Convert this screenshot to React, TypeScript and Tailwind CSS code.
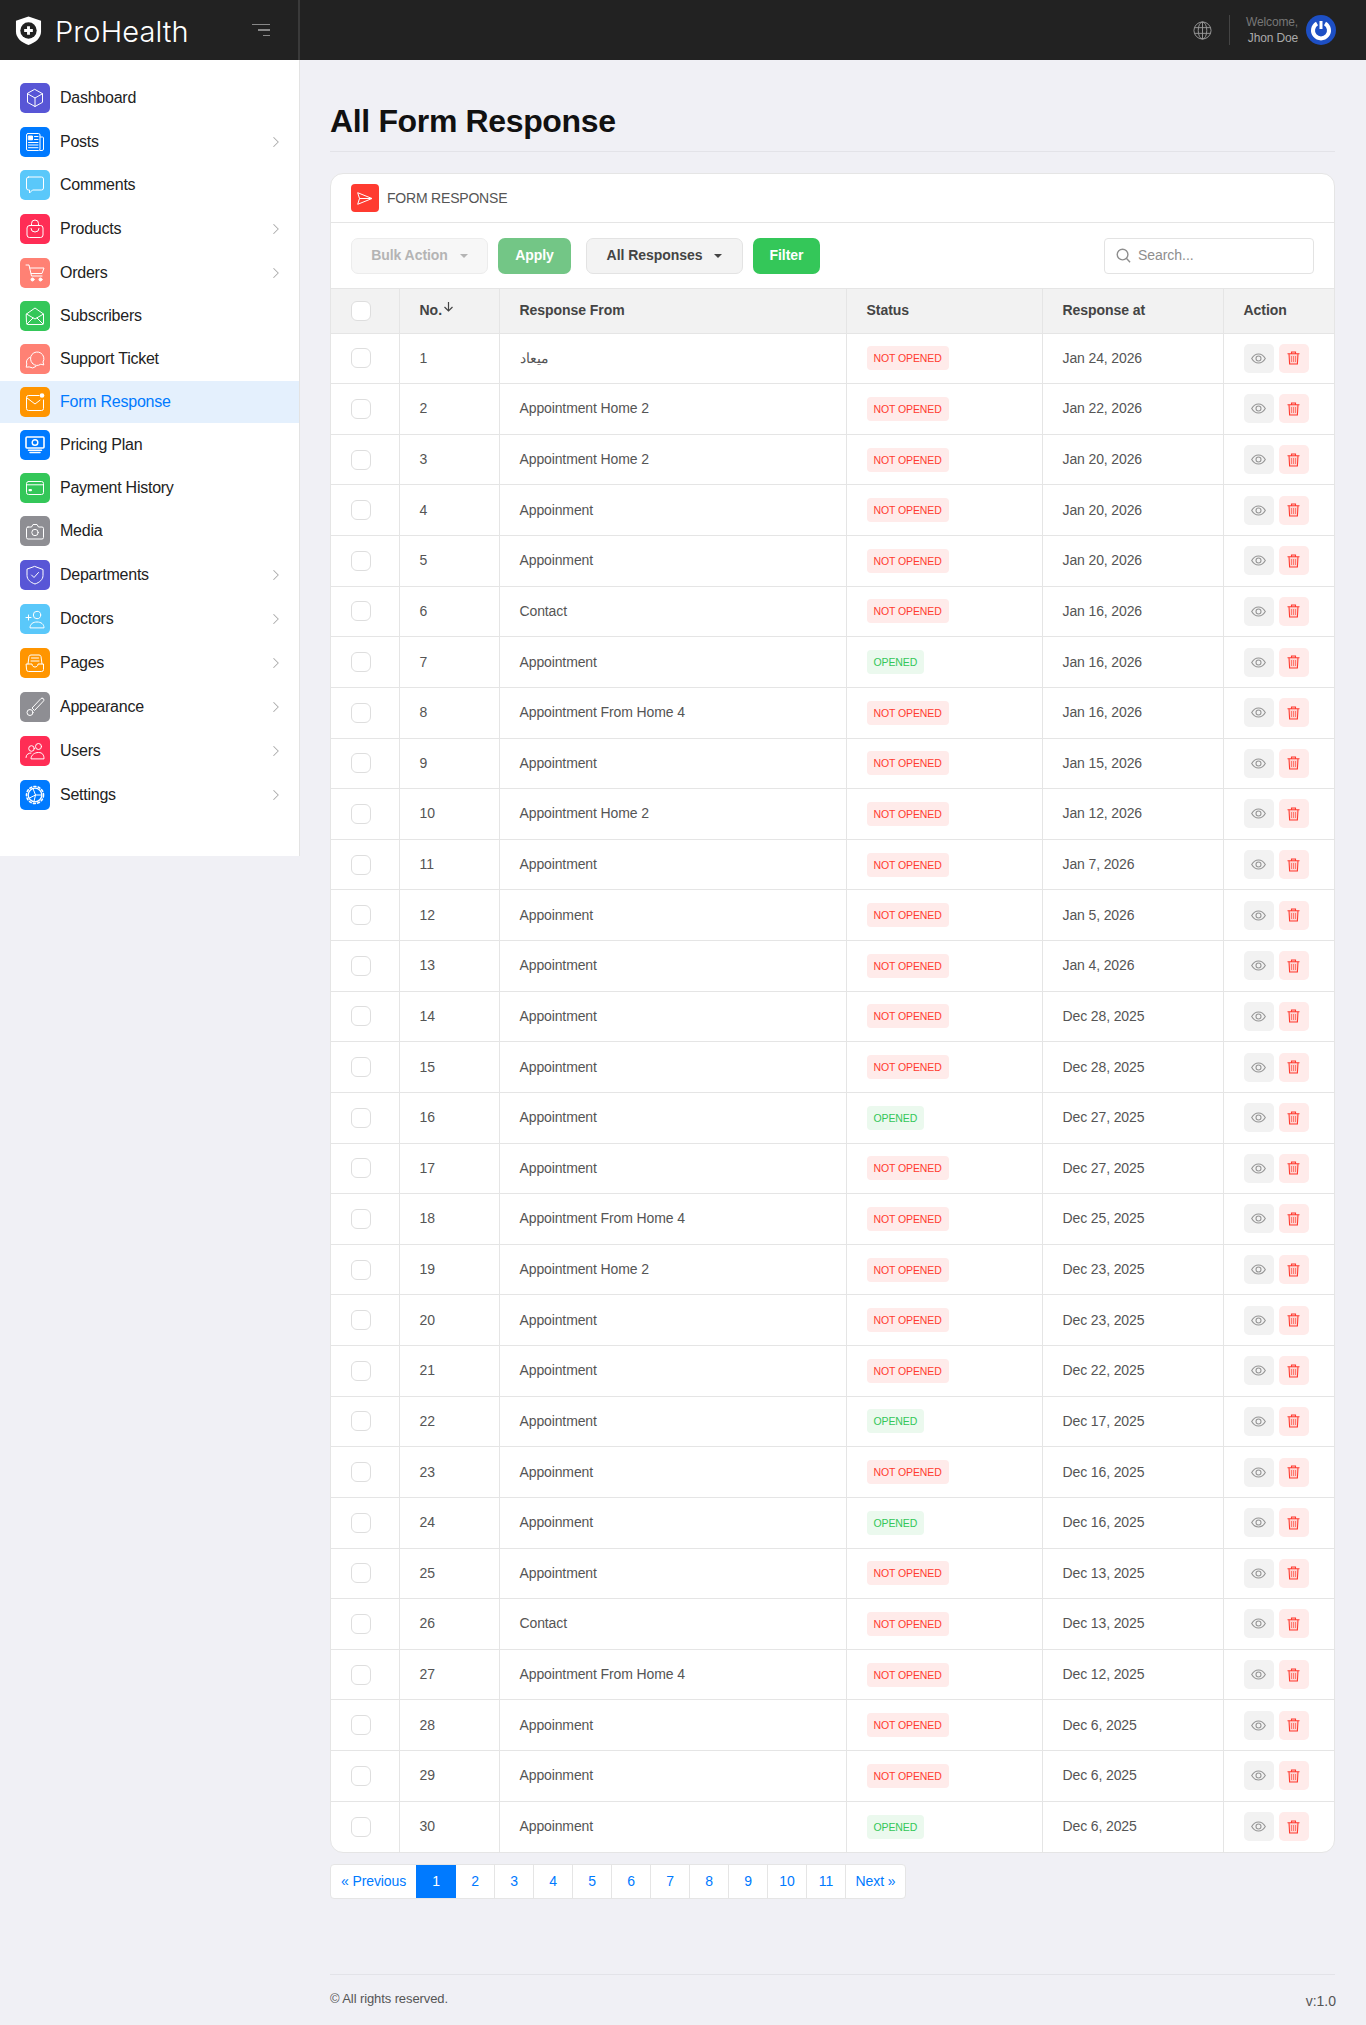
import { ChevronRight } from 'lucide-react'
import type { ReactNode } from 'react'

const ICONS: Record<string, ReactNode> = {
  cube: <path d="M10 1.500l7.500 4.200v8.600L10 18.500l-7.500-4.200V5.700zM2.500 5.700L10 10l7.500-4.300M10 10v8.500" />,
  news: (
    <>
      <rect x="1.500" y="1.500" width="13.500" height="17" rx="1.500" />
      <path d="M15 5h2.500a1 1 0 011 1v11a1.500 1.500 0 01-1.500 1.500h-2M9.500 4.500h3.500M9.500 7.500h3.500M3.500 10.500h9.500M3.500 13h9.500M3.500 15.700h9.500" />
      <rect x="3.700" y="4" width="3.800" height="3.800" fill="white" />
    </>
  ),
  comment: <path d="M3.500 2h13a2 2 0 012 2v9a2 2 0 01-2 2H7.500l-3 3v-3h-1a2 2 0 01-2-2V4a2 2 0 012-2z" />,
  bag: (
    <>
      <rect x="2" y="6.500" width="16" height="12" rx="2.500" />
      <path d="M6.500 6.500V4.500a3.500 3.500 0 017 0v2M6 9.500a4 3.500 0 008 0" />
    </>
  ),
  cart: (
    <>
      <path d="M1 2h3l2.500 11h10.500M5 5h14l-2 5.500H6.200" />
      <circle cx="7.500" cy="16.500" r="1.500" fill="white" />
      <circle cx="15.500" cy="16.500" r="1.500" fill="white" />
    </>
  ),
  mailOpen: <path d="M1.500 8L10 2l8.500 6v9a1.500 1.500 0 01-1.500 1.500H3A1.500 1.500 0 011.500 17zM1.500 8l8.500 5 8.500-5M2 18l6-6M18 18l-6-6" />,
  support: <path d="M7.500 14.500a6.700 6.700 0 1110.500-1.500l.8 3-3-.8a6.700 6.700 0 01-8.300-.7zM4.500 8.500a5 5 0 00-2.700 6.500l-.6 3.200 3-.3a5.500 5.500 0 006.800-.4" />,
  mailDot: (
    <>
      <path d="M14 3.500H3.500a2 2 0 00-2 2v11a2 2 0 002 2h13a2 2 0 002-2V8M1.800 5.800L10 12l5-3.800" />
      <circle cx="17" cy="3.500" r="2.300" fill="white" stroke="none" />
    </>
  ),
  cash: (
    <>
      <rect x="1" y="2" width="18" height="11" rx="1" strokeWidth="1.600" />
      <circle cx="10" cy="7.500" r="2.800" strokeWidth="1.400" />
      <path d="M3.500 15.200h13M5 17.500h10" strokeWidth="1.500" />
    </>
  ),
  card: (
    <>
      <rect x="1.500" y="3.500" width="17" height="13" rx="2" />
      <path d="M1.500 6.800h17" />
      <rect x="3.500" y="11" width="3.500" height="2.200" rx="1" fill="white" stroke="none" />
    </>
  ),
  camera: (
    <>
      <path d="M3 6h3.500L8 3.500h4L13.500 6H17a1.500 1.500 0 011.500 1.500v9A1.500 1.500 0 0117 18H3a1.500 1.500 0 01-1.500-1.500v-9A1.500 1.500 0 013 6z" />
      <circle cx="10" cy="11.500" r="3.200" />
    </>
  ),
  shield: <path d="M10 1.500l8 3v6c0 4-3.500 7-8 8.500-4.500-1.500-8-4.500-8-8.500v-6zM6.500 10l2.500 2.500 4.500-5" />,
  doctor: (
    <>
      <circle cx="12" cy="6" r="3.700" />
      <path d="M5 18.500c0-3.500 3-5.500 7-5.500s7 2 7 5.500zM1 8.500h5M3.500 6v5" />
    </>
  ),
  tray: <path d="M1.500 11h5.500c0 2 1.500 3 3 3s3-1 3-3h5.500v5.500a2 2 0 01-2 2h-13a2 2 0 01-2-2zM3 11l1-7.500a2 2 0 012-1.500h8a2 2 0 012 1.500l1 7.500M6.500 5h7M6 8h8" />,
  brush: (
    <>
      <path d="M18 1.500a1.500 1.500 0 00-2 0L7 11l2.500 2.500 9-9.500a1.500 1.500 0 00-.5-2.500z" />
      <circle cx="5" cy="15.500" r="3" />
    </>
  ),
  users: (
    <>
      <circle cx="6.500" cy="7.500" r="2.800" />
      <circle cx="13.500" cy="5.500" r="3" />
      <path d="M1 16.500c0-3 2.500-4.500 5-4.500M6 17.500c0-3.500 3.500-6 7.500-6s5.500 2.500 5.500 6z" />
    </>
  ),
  gear: (
    <>
      <circle cx="10" cy="10" r="6.800" strokeWidth="1.300" />
      <circle cx="10" cy="10" r="8.500" strokeWidth="1.600" strokeDasharray="2 2.300" />
      <path d="M8 3.500L10.500 10l-6 3M10.500 10H16.500M10.500 10l-1.500 6.500" />
    </>
  ),
}

const MENU = [
  { label: 'Dashboard', icon: 'cube', bg: 'bg-[#5856d6]' },
  { label: 'Posts', icon: 'news', bg: 'bg-[#007aff]', sub: true },
  { label: 'Comments', icon: 'comment', bg: 'bg-[#5ac8fa]' },
  { label: 'Products', icon: 'bag', bg: 'bg-[#ff2d55]', sub: true },
  { label: 'Orders', icon: 'cart', bg: 'bg-[#ff8174]', sub: true },
  { label: 'Subscribers', icon: 'mailOpen', bg: 'bg-[#34c759]' },
  { label: 'Support Ticket', icon: 'support', bg: 'bg-[#ff8174]' },
  { label: 'Form Response', icon: 'mailDot', bg: 'bg-[#ff9500]', active: true },
  { label: 'Pricing Plan', icon: 'cash', bg: 'bg-[#007aff]' },
  { label: 'Payment History', icon: 'card', bg: 'bg-[#34c759]' },
  { label: 'Media', icon: 'camera', bg: 'bg-[#8e8e93]' },
  { label: 'Departments', icon: 'shield', bg: 'bg-[#5856d6]', sub: true },
  { label: 'Doctors', icon: 'doctor', bg: 'bg-[#5ac8fa]', sub: true },
  { label: 'Pages', icon: 'tray', bg: 'bg-[#ff9500]', sub: true },
  { label: 'Appearance', icon: 'brush', bg: 'bg-[#8e8e93]', sub: true },
  { label: 'Users', icon: 'users', bg: 'bg-[#ff2d55]', sub: true },
  { label: 'Settings', icon: 'gear', bg: 'bg-[#007aff]', sub: true },
]

const A = 'Appointment'
const B = 'Appoinment'
const H = 'Appointment Home 2'
const F = 'Appointment From Home 4'

// response from, date, opened
const ROWS: [string, string, boolean?][] = [
  ['ميعاد', 'Jan 24, 2026'],
  [H, 'Jan 22, 2026'],
  [H, 'Jan 20, 2026'],
  [B, 'Jan 20, 2026'],
  [B, 'Jan 20, 2026'],
  ['Contact', 'Jan 16, 2026'],
  [A, 'Jan 16, 2026', true],
  [F, 'Jan 16, 2026'],
  [A, 'Jan 15, 2026'],
  [H, 'Jan 12, 2026'],
  [A, 'Jan 7, 2026'],
  [B, 'Jan 5, 2026'],
  [A, 'Jan 4, 2026'],
  [A, 'Dec 28, 2025'],
  [A, 'Dec 28, 2025'],
  [A, 'Dec 27, 2025', true],
  [A, 'Dec 27, 2025'],
  [F, 'Dec 25, 2025'],
  [H, 'Dec 23, 2025'],
  [A, 'Dec 23, 2025'],
  [A, 'Dec 22, 2025'],
  [A, 'Dec 17, 2025', true],
  [B, 'Dec 16, 2025'],
  [B, 'Dec 16, 2025', true],
  [A, 'Dec 13, 2025'],
  ['Contact', 'Dec 13, 2025'],
  [F, 'Dec 12, 2025'],
  [B, 'Dec 6, 2025'],
  [B, 'Dec 6, 2025'],
  [B, 'Dec 6, 2025', true],
]

const Checkbox = () => (
  <span className="block w-[20px] h-[20px] rounded-[6px] border border-[#dedede] bg-white" />
)

const Caret = ({ className }: { className: string }) => (
  <span className={`inline-block ml-[12px] mb-[2px] w-0 h-0 border-x-[4px] border-x-transparent border-t-[4px] ${className}`} />
)

const Header = () => (
  <header className="h-[60px] bg-[#222222] flex items-center">
    <div className="w-[300px] h-full flex items-center border-r-2 border-[#3a3a3a] shrink-0">
      <svg width="27" height="29" viewBox="0 0 28 30" className="ml-[15px]">
        <path d="M14 0.500L27 5v11c0 7-6 11.500-13 14C7 27.500 1 23 1 16V5z" fill="white" />
        <circle cx="14" cy="15" r="8.500" fill="#222222" />
        <path d="M14 10.500v9M9.500 15h9" stroke="white" strokeWidth="3" />
      </svg>
      <span className="ml-[13px] mt-[2px] font-['Inter'] font-light text-[29px] leading-none text-white tracking-[0.1px]">ProHealth</span>
      <div className="ml-auto mr-[28px] flex flex-col items-end gap-[4px]">
        <span className="block w-[18px] h-[1.5px] bg-[#888888]" />
        <span className="block w-[12px] h-[1.5px] bg-[#888888]" />
        <span className="block w-[7px] h-[1.5px] bg-[#888888]" />
      </div>
    </div>
    <div className="flex-1 flex items-center justify-end pr-[30px]">
      <svg width="19" height="19" viewBox="0 0 20 20" fill="none" stroke="#999999" strokeWidth="1">
        <circle cx="10" cy="10" r="9" />
        <ellipse cx="10" cy="10" rx="4.500" ry="9" />
        <path d="M10 1v18M1.500 7h17M1.500 13h17" />
      </svg>
      <span className="ml-[17px] block w-px h-[30px] bg-[#444444]" />
      <div className="ml-[16px] text-right text-[12px] leading-[16px] tracking-[-0.15px]">
        <div className="text-[#777777]">Welcome,</div>
        <div className="text-[#aaaaaa]">Jhon Doe</div>
      </div>
      <div className="ml-[8px] w-[30px] h-[30px] rounded-full bg-[#1d4fc4] flex items-center justify-center">
        <svg width="22" height="22" viewBox="0 0 22 22" fill="none" stroke="white" strokeWidth="4">
          <path d="M7 4.500a8 8 0 108 0" />
          <path d="M11 2v8" strokeWidth="3" />
        </svg>
      </div>
    </div>
  </header>
)

const Sidebar = () => (
  <aside className="w-[300px] h-[796px] shrink-0 bg-white border-r border-[#e3e3e3] pt-[17px]">
    {MENU.map((item) => (
      <div
        key={item.label}
        className={`flex items-center pl-[20px] pr-[14px] mb-px ${item.sub ? 'h-[43px]' : 'h-[42px]'} ${item.active ? 'bg-[#e4f0fd]' : ''}`}
      >
        <span className={`w-[30px] h-[30px] rounded-[5px] flex items-center justify-center shrink-0 ${item.bg}`}>
          <svg width="20" height="20" viewBox="0 0 20 20" fill="none" stroke="white" strokeWidth="1" strokeLinejoin="round" strokeLinecap="round">
            {ICONS[item.icon]}
          </svg>
        </span>
        <span className={`ml-[10px] text-[16px] tracking-[-0.25px] ${item.active ? 'text-[#007aff]' : 'text-[#222222]'}`}>{item.label}</span>
        {item.sub && <ChevronRight size={18} strokeWidth={1.4} className="ml-auto text-[#aaaaaa]" />}
      </div>
    ))}
  </aside>
)

const Toolbar = () => (
  <div className="h-[66px] flex items-center px-[20px] border-b border-[#e5e5e5] font-bold text-[14px] tracking-[-0.05px]">
    <button className="w-[137px] h-[36px] rounded-[7px] border border-[#ececec] bg-[#f7f7f7] text-[#b4b4b4]">
      Bulk Action<Caret className="border-t-[#b4b4b4]" />
    </button>
    <button className="ml-[10px] w-[73px] h-[36px] rounded-[7px] bg-[#73c686] text-white">Apply</button>
    <button className="ml-[15px] w-[157px] h-[36px] rounded-[7px] border border-[#e3e3e3] bg-[#f3f3f3] text-[#444444]">
      All Responses<Caret className="border-t-[#444444]" />
    </button>
    <button className="ml-[10px] w-[67px] h-[36px] rounded-[7px] bg-[#34c759] text-white">Filter</button>
    <div className="ml-auto w-[210px] h-[36px] rounded-[4px] border border-[#e3e3e3] bg-white flex items-center pl-[11px]">
      <svg width="15" height="15" viewBox="0 0 16 16" fill="none" stroke="#8e8e8e" strokeWidth="1.500">
        <circle cx="7" cy="7" r="5.700" />
        <path d="M11 11l4 4.300" />
      </svg>
      <span className="ml-[7px] font-normal text-[#8e8e8e]">Search...</span>
    </div>
  </div>
)

const RowActions = () => (
  <div className="flex gap-[5px]">
    <span className="w-[30px] h-[29px] rounded-[5px] bg-[#f2f2f2] flex items-center justify-center">
      <svg width="15" height="11" viewBox="0 0 15 11" fill="none" stroke="#969696" strokeWidth="1.100">
        <path d="M0.700 5.500C2.500 2.300 5 1 7.500 1s5 1.300 6.800 4.500C12.500 8.700 10 10 7.500 10S2.500 8.700 0.700 5.500z" />
        <circle cx="7.500" cy="5.500" r="2.500" />
      </svg>
    </span>
    <span className="w-[30px] h-[29px] rounded-[5px] bg-[#ffebea] flex items-center justify-center">
      <svg width="13" height="14" viewBox="0 0 13 14" fill="none" stroke="#ff3b30" strokeWidth="1.100">
        <path d="M0.500 2.800h12M4.500 2.500V1h4v1.500M2 2.800l0.600 10.200h7.800L11 2.800" fill="#ffd6d3" />
        <path d="M4.500 5v6M6.500 5v6M8.500 5v6" stroke="#ff7a71" />
      </svg>
    </span>
  </div>
)

const Table = () => (
  <table className="w-full table-fixed border-collapse text-[14px] text-[#555555]">
    <colgroup>
      <col className="w-[68px]" />
      <col className="w-[100px]" />
      <col className="w-[347px]" />
      <col className="w-[196px]" />
      <col className="w-[181px]" />
      <col />
    </colgroup>
    <thead>
      <tr className="h-[44px] bg-[#f2f2f2] text-[#444444] font-bold text-left">
        <th className="pl-[20px] border-b border-r border-[#e5e5e5]"><Checkbox /></th>
        <th className="pl-[20px] border-b border-r border-[#e5e5e5]">
          <span className="inline-flex items-start">
            No.
            <svg width="11" height="11" viewBox="0 0 11 11" fill="none" stroke="#444444" strokeWidth="1.200" className="mt-[1px] ml-px">
              <path d="M5.500 1v9M1.500 6l4 4 4-4" />
            </svg>
          </span>
        </th>
        <th className="pl-[20px] border-b border-r border-[#e5e5e5] tracking-[-0.05px]">Response From</th>
        <th className="pl-[20px] border-b border-r border-[#e5e5e5] tracking-[-0.05px]">Status</th>
        <th className="pl-[20px] border-b border-r border-[#e5e5e5] tracking-[-0.05px]">Response at</th>
        <th className="pl-[20px] border-b border-[#e5e5e5] tracking-[-0.05px]">Action</th>
      </tr>
    </thead>
    <tbody className="tracking-[-0.12px]">
      {ROWS.map(([from, date, opened], i) => (
        <tr key={i} className="h-[50.63px]">
          <td className={`pl-[20px] border-r border-[#e5e5e5] ${i < 29 ? 'border-b' : ''}`}><Checkbox /></td>
          <td className={`pl-[20px] border-r border-[#e5e5e5] ${i < 29 ? 'border-b' : ''}`}>{i + 1}</td>
          <td className={`pl-[20px] border-r border-[#e5e5e5] ${i < 29 ? 'border-b' : ''}`}>{from}</td>
          <td className={`pl-[20px] border-r border-[#e5e5e5] ${i < 29 ? 'border-b' : ''}`}>
            {opened ? (
              <span className="inline-block h-[24px] leading-[24px] px-[7px] rounded-[4px] bg-[#ebf9ee] text-[#34c759] text-[10.5px] tracking-[-0.1px]">OPENED</span>
            ) : (
              <span className="inline-block h-[24px] leading-[24px] px-[7px] rounded-[4px] bg-[#ffebea] text-[#ff3b30] text-[10.5px] tracking-[-0.1px]">NOT OPENED</span>
            )}
          </td>
          <td className={`pl-[20px] border-r border-[#e5e5e5] ${i < 29 ? 'border-b' : ''}`}>{date}</td>
          <td className={`pl-[20px] border-[#e5e5e5] ${i < 29 ? 'border-b' : ''}`}><RowActions /></td>
        </tr>
      ))}
    </tbody>
  </table>
)

const Pagination = () => {
  const pages = ['1', '2', '3', '4', '5', '6', '7', '8', '9', '10', '11']
  return (
    <div className="mt-[11px] w-fit h-[35px] flex items-stretch rounded-[4px] border border-[#e5e5e5] bg-white text-[14px] text-[#007aff] tracking-[-0.1px]">
      <span className="w-[85px] flex items-center justify-center">« Previous</span>
      {pages.map((p, i) => (
        <span
          key={p}
          className={`flex items-center justify-center ${i === 0 ? 'w-[40px] bg-[#007aff] text-white' : 'w-[39px] border-r border-[#e5e5e5]'}`}
        >
          {p}
        </span>
      ))}
      <span className="w-[59px] flex items-center justify-center">Next »</span>
    </div>
  )
}

export default function App() {
  return (
    <div className="min-h-[2025px] bg-[#f0f0f5] font-['Liberation_Sans',Arial,sans-serif]">
      <Header />
      <div className="flex items-start">
        <Sidebar />
        <main className="flex-1 pl-[30px] pr-[31px]">
          <h1 className="pt-[41px] h-[92px] border-b border-[#e3e3e8] text-[32px] leading-[40px] font-bold text-[#111111] tracking-[-0.35px]">All Form Response</h1>
          <section className="mt-[21px] rounded-[13px] border border-[#e5e5e5] bg-white overflow-hidden">
            <div className="h-[49px] flex items-center pl-[20px] border-b border-[#e5e5e5]">
              <span className="w-[28px] h-[28px] rounded-[4px] bg-[#ff3b30] flex items-center justify-center">
                <svg width="16" height="13" viewBox="0 0 16 13" fill="none" stroke="white" strokeWidth="1">
                  <path d="M0.700 0.700L15 6.500 0.700 12.300 2.500 6.500zM2.500 6.500H15" />
                </svg>
              </span>
              <span className="ml-[8px] text-[14px] text-[#555555] tracking-[-0.2px]">FORM RESPONSE</span>
            </div>
            <Toolbar />
            <Table />
          </section>
          <Pagination />
          <footer className="mt-[75px] h-[49px] border-t border-[#e3e3e8] flex justify-between text-[#555555]">
            <span className="mt-[16px] text-[13px] leading-[16px] tracking-[-0.1px]">© All rights reserved.</span>
            <span className="mt-[17px] mr-[-1px] text-[14px] leading-[18px]">v:1.0</span>
          </footer>
        </main>
      </div>
    </div>
  )
}
